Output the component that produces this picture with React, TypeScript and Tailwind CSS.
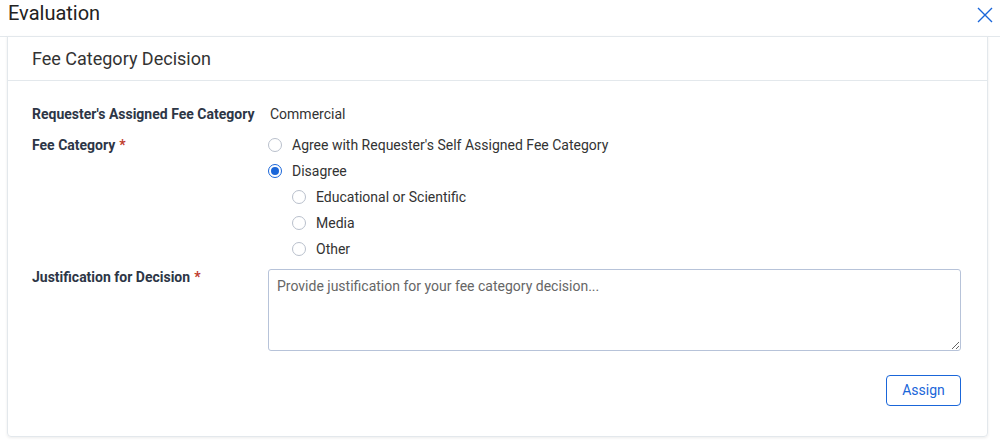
import React, {useState} from "react";

const Radio: React.FC<{checked?: boolean; label: string; onClick?: () => void}> = ({checked, label, onClick}) => {
  return (
    <div className="flex items-center h-[26px] gap-[10px] cursor-pointer" onClick={onClick}>
      {checked ? (
        <span className="w-[14px] h-[14px] rounded-full border border-[#1a66d9] flex items-center justify-center">
          <span className="w-[8px] h-[8px] rounded-full bg-[#1a66d9]" />
        </span>
      ) : (
        <span className="w-[14px] h-[14px] rounded-full border border-[#b9c0cc] bg-white" />
      )}
      <span className="text-[14px] text-[#333]">{label}</span>
    </div>
  );
};

export default function App() {
  const [top, setTop] = useState<"agree" | "disagree">("disagree");
  const [sub, setSub] = useState<string>("");

  return (
    <div className="w-[1000px] h-[442px] bg-white overflow-hidden" style={{fontFamily: "Roboto, 'Liberation Sans', sans-serif"}}>
      <div className="h-[37px] flex items-center justify-between pl-[8px] pr-[6px] border-b border-[#e3e8ec]">
        <span className="text-[20px] text-[#222] leading-none pb-[10px]">Evaluation</span>
        <svg width="18" height="18" viewBox="0 0 18 18" className="mb-[8px] mt-[2px]">
          <path d="M2 2 L16 16 M16 2 L2 16" stroke="#1a66d9" strokeWidth="1.4" fill="none" />
        </svg>
      </div>

      <div className="ml-[7px] mr-[12px] mt-[-1px] border border-[#e3e8ec] rounded-b-[4px] shadow-[0_1px_3px_rgba(0,0,0,0.08)]">
        <div className="h-[44px] flex items-center px-[24px] border-b border-[#e3e8ec]">
          <span className="text-[18px] text-[#333]">Fee Category Decision</span>
        </div>

        <div className="pl-[24px] pr-[26px] pt-[20px] pb-[30px]">
          <div className="flex h-[26px] items-center">
            <div className="w-[236px] text-[14px] font-bold text-[#2d3646]">Requester's Assigned Fee Category</div>
            <div className="text-[14px] text-[#333] pl-[2px]">Commercial</div>
          </div>

          <div className="flex mt-[5px]">
            <div className="w-[236px] h-[26px] flex items-center text-[14px] font-bold text-[#2d3646]">
              Fee Category <span className="text-[#c0392b] ml-[4px]">*</span>
            </div>
            <div className="flex flex-col">
              <Radio label="Agree with Requester's Self Assigned Fee Category" checked={top === "agree"} onClick={() => setTop("agree")} />
              <Radio label="Disagree" checked={top === "disagree"} onClick={() => setTop("disagree")} />
              <div className="flex flex-col pl-[24px]">
                <Radio label="Educational or Scientific" checked={sub === "edu"} onClick={() => setSub("edu")} />
                <Radio label="Media" checked={sub === "media"} onClick={() => setSub("media")} />
                <Radio label="Other" checked={sub === "other"} onClick={() => setSub("other")} />
              </div>
            </div>
          </div>

          <div className="flex mt-[7px]">
            <div className="w-[236px] text-[14px] leading-[16px] font-bold text-[#2d3646]">
              Justification for Decision<span className="text-[#c0392b] ml-[4px]">*</span>
            </div>
            <textarea
              className="flex-1 h-[82px] border border-[#b7c3d9] rounded-[3px] px-[8px] py-[6px] text-[14px] text-[#333] placeholder:text-[#666] outline-none resize-y"
              placeholder="Provide justification for your fee category decision..."
            />
          </div>

          <div className="flex justify-end mt-[24px]">
            <button className="w-[75px] h-[31px] border border-[#1a66d9] rounded-[4px] text-[14px] text-[#1a66d9] bg-white">
              Assign
            </button>
          </div>
        </div>
      </div>
    </div>
  );
}
